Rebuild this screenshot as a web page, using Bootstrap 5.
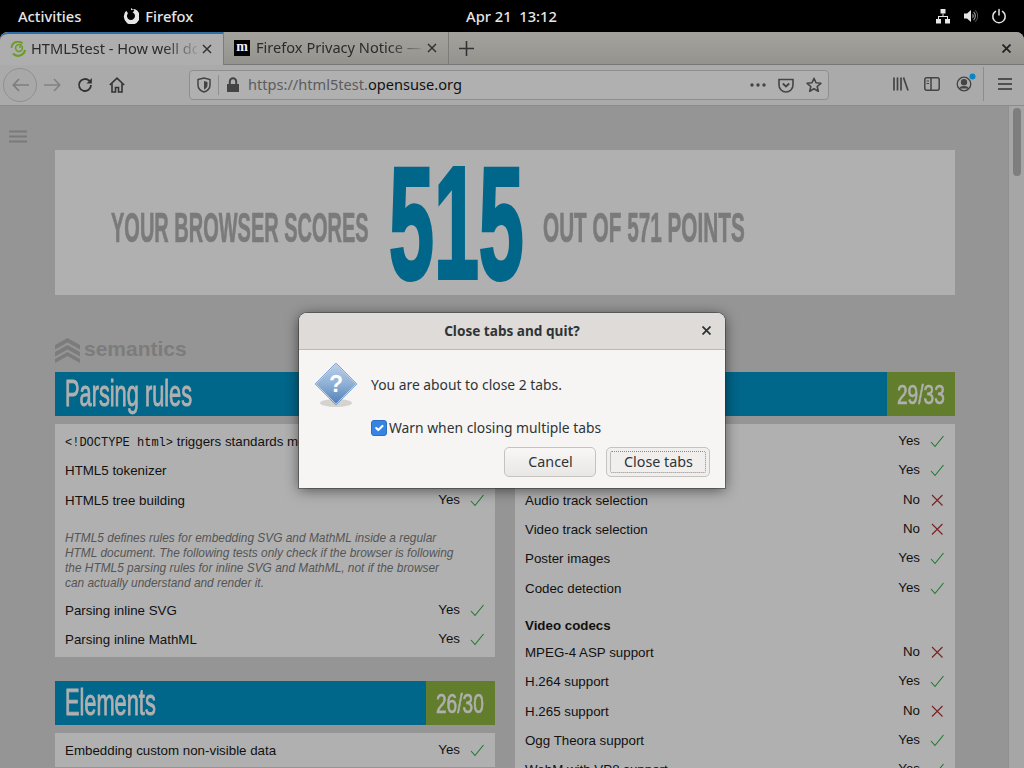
<!DOCTYPE html>
<html lang="en">
<head>
<meta charset="utf-8">
<title>Close tabs and quit?</title>
<link rel="stylesheet" href="https://cdn.jsdelivr.net/npm/bootstrap@5.3.0/dist/css/bootstrap.min.css">
<style>
html,body{margin:0;height:768px;overflow:hidden;background:#000}
.desk{position:relative;width:1024px;height:768px;overflow:hidden;font-family:"Noto Sans","Open Sans",sans-serif}
.topbar{height:32px;background:#000;color:#e6e6e6;font-size:14.7px;font-weight:500;padding:0 17px 0 18px}
.topbar .clock{position:absolute;left:0;right:0;text-align:center;padding-right:1px}
.ffname{margin-left:42px}
.ffname svg{margin-right:6px}
.tray{margin-left:auto;gap:12px}
.win{height:736px;background:#959595;border-radius:8px 8px 0 0;overflow:hidden}
.tabstrip{height:33px;background:linear-gradient(#a4a29d,#95938e);border-bottom:1px solid #777;color:#2b2b2b;font-size:14.6px}
.tabx{height:32px;width:225px;padding:0 11px 0 10px;gap:6px;border-right:1px solid #7c7c78}
.tabx.on{background:#aeaeae;border-top:2px solid #2e6ea8;border-radius:8px 0 0 0;height:33px;padding:0 11px 2px 10px;gap:5px;width:224px;border-right:1px solid #7c7c78}
.tabt{flex:1;white-space:nowrap;overflow:hidden;-webkit-mask-image:linear-gradient(90deg,#000 80%,rgba(0,0,0,.15) 100%);mask-image:linear-gradient(90deg,#000 80%,rgba(0,0,0,.15) 100%)}
.mfav{width:16px;height:16px;background:#000;color:#eee;font:bold 14px/14px "Liberation Serif",serif;text-align:center;flex:none}
.newtab{width:34px}
.winx{margin-left:auto;margin-right:13px}
.toolbar{height:41px;background:#aaaaaa;border-bottom:1px solid #8c8c8c;position:relative;padding-left:3px;padding-bottom:1px}
.backc{width:34px;height:34px;border:1px solid #909090;border-radius:50%;background:#a8a8a8;flex:none}
.tbi{width:32px;flex:none}
.tbfwd{margin:0 3px 0 -3px}
.urlbar{position:absolute;left:189px;top:5px;width:640px;height:30px;background:#b0b0b0;border:1px solid #8e8e8e;border-radius:4px;padding:0 6px 0 7px;font-size:14.6px;color:#5c5c5c}
.urlsep{width:1px;height:20px;background:#8e8e8e;margin:0 7px}
.urlbar b{font-weight:400;color:#111}
.urlend{margin-left:auto;gap:12px}
.tbright{position:absolute;left:893px;top:-1px;height:40px;width:125px}
.vsep{width:1px;height:34px;background:#8c8c8c;position:absolute;left:90px;top:3px}
.viewport{height:662px;position:relative}
.pagescroll{flex:1;min-width:0}
.sbar{width:16px;background:#a6a6a6;border-left:1px solid #909090;flex:none;padding:2px 3px 0 4px}
.sthumb{width:8px;height:68px;background:#7e7e7e;border-radius:4px}
.burger{padding:24px 0 0 9px;height:44px}
.wrapcol{padding-left:55px;width:1008px}
.banner{width:900px;height:145px;background:#b0b0b0;padding-left:56px;gap:20px}
.slim{display:inline-block;font-family:"Liberation Sans Narrow","Liberation Sans",sans-serif;font-weight:700;white-space:nowrap;transform-origin:0 50%}
.boxa{width:258px;height:50px;color:#7a7a7a;margin-top:11px}
.boxb{width:134px;height:145px;color:#00668a}
.boxc{width:201px;height:50px;color:#7a7a7a;margin-top:11px}
.boxa .slim,.boxc .slim{font-size:42px;line-height:50px;-webkit-text-stroke:.7px currentColor}
.boxa .slim{transform:scaleX(.476)}
.boxc .slim{transform:scaleX(.494)}
.boxb .slim{font-size:160px;line-height:145px;transform:scaleX(.505);-webkit-text-stroke:4px currentColor}
.semhead{margin-top:42px;height:35px;color:#7c7c7c;font:700 21px/24px "Liberation Sans",sans-serif;gap:4px;align-items:flex-start}
.semhead svg{margin-top:1px}
.cols{width:900px;gap:20px}
.colw{width:440px}
.sechd{height:44px;background:#00668a;color:#b0b0b0}
.sechd .slim{font-size:36px;line-height:44px;font-weight:400;margin-left:10px;transform:scaleX(.605);-webkit-text-stroke:.9px currentColor}
.scorebox{background:#627d2b;height:44px;color:#b0b0b0;flex:none;overflow:hidden}
.scorebox .slim{font-size:28.500px;line-height:44px;font-weight:400;margin-left:10px;transform:scaleX(.67);-webkit-text-stroke:.7px currentColor}
.sb68{width:68px}
.sb69{width:69px}
.tests{margin-top:8px;background:#b0b0b0;padding:2.4px 0 2.6px;color:#111;font:13.33px/15px "Liberation Sans",sans-serif}
.trow{height:29.33px;padding:0 11px 0 10px;align-items:center;white-space:nowrap}
.tlab{flex:1;padding-top:1px}
.tlab code{font:12px "Liberation Mono",monospace;color:#111}
.tres{width:32px;text-align:right;padding-bottom:1px;margin-right:10px}
.tnote{font:italic 11.9px/15px "Liberation Sans",sans-serif;color:#555;padding:17px 10px 4px;margin:0}
.tgroup{font-weight:700;height:35px;padding:16px 10px 0}
.mt24x{margin-top:24px}
.dlg{position:absolute;left:299px;top:313px;width:426px;height:175px;background:#f6f5f4;border-radius:8px 8px 0 0;box-shadow:0 2px 14px rgba(0,0,0,.55),0 0 0 1px rgba(60,60,60,.45);color:#2e3436;font-size:13.85px}
.dlghd{height:37px;background:#dedbd8;border-bottom:1px solid #bcb8b3;border-radius:8px 8px 0 0;font-weight:700;font-size:13.6px;position:relative}
.dlgx{position:absolute;left:403px;top:13px;line-height:0}
.dlgbody{padding:13px 15px 0 16px}
.dlgmsg{gap:14px;height:43px}
.dlgmsg svg{margin-top:2px}
.dlgmsg span{padding-top:2px}
.dlgchk{margin:12px 0 0 56px;gap:2px;height:20px}
.dlgchk .form-check-input{width:16px;height:16px;margin:0;background-color:#3584e4;border-color:#2a6fc0;border-radius:3px;flex:none;opacity:1}
.dlgbtns{margin-top:9px;gap:10px;justify-content:flex-end}
.gbtn{height:30px;padding:0;font-size:14.3px;line-height:28px;color:#2e3436;background:linear-gradient(#f8f7f6,#e9e7e5);border:1px solid #c6c2bd;border-radius:5px}
.gcancel{width:92px;padding-left:1px}
.gclose{width:104px;padding:3px;background:#f0efed}
.gclose span{display:block;height:22px;line-height:20px;border:1px dotted #8a8a8a;border-radius:2px;padding-left:1px}
</style>
</head>
<body>
<div class="desk">
  <div class="topbar d-flex align-items-center">
    <span>Activities</span>
    <span class="ffname d-flex align-items-center">
      <svg width="16" height="16" viewBox="0 0 16 16"><path fill="#e6e6e6" d="M8 2.2V0l3.4 2.4L9.6 4.6C11 5.1 12 6.4 12 8a4 4 0 1 1-7-2.7L3.2 2.8A8 8 0 1 0 11.6 1L8 2.2z"/></svg>Firefox</span>
    <span class="clock">Apr 21&nbsp; 13:12</span>
    <span class="tray d-flex align-items-center">
      <svg width="16" height="16" viewBox="0 0 16 16" fill="#e6e6e6"><path d="M5.500 1h5v4.500h-5zM1 11h5v4.500H1zM10 11h5v4.500h-5z"/><path d="M7.500 5.500h1V8h4.500v3h-1V9H4v2H3V8h4.500z"/></svg>
      <svg width="16" height="16" viewBox="0 0 16 16" fill="#e6e6e6"><path d="M1 5.500h3L8 2v12l-4-3.500H1z"/><path d="M9.500 5.500a3.500 3.500 0 0 1 0 5zM11 3.500a6.500 6.500 0 0 1 0 9l-.7-.7a5.500 5.500 0 0 0 0-7.600z" opacity=".75"/><path d="M12.600 2a8.500 8.500 0 0 1 0 12l-.6-.6a7.500 7.500 0 0 0 0-10.800z" opacity=".45"/></svg>
      <svg width="16" height="16" viewBox="0 0 16 16" fill="none" stroke="#e6e6e6" stroke-width="1.500" stroke-linecap="round"><path d="M8 1.500V7M4.500 3.400a6.200 6.200 0 1 0 7 0"/></svg>
    </span>
  </div>
  <div class="win">
    <div class="tabstrip d-flex align-items-start">
      <div class="tabx on d-flex align-items-center">
        <svg width="16" height="16" viewBox="0 0 16 16" fill="none"><path d="M3 12.500A7 7 0 0 0 15 9" stroke="#6c9b22" stroke-width="2.200"/><path d="M1.500 7A6.500 6.500 0 0 1 12.500 2.500" stroke="#6c9b22" stroke-width="1.800"/><circle cx="9" cy="7" r="3.400" stroke="#6c9b22" stroke-width="1.500"/><circle cx="10" cy="6" r="1" fill="#6c9b22"/></svg>
        <span class="tabt">HTML5test - How well do</span>
        <svg width="10" height="10" viewBox="0 0 10 10" stroke="#333" stroke-width="1.500"><path d="M1 1l8 8M9 1l-8 8"/></svg>
      </div>
      <div class="tabx d-flex align-items-center">
        <span class="mfav">m</span>
        <span class="tabt">Firefox Privacy Notice — Mozilla</span>
        <svg width="10" height="10" viewBox="0 0 10 10" stroke="#333" stroke-width="1.500"><path d="M1 1l8 8M9 1l-8 8"/></svg>
      </div>
      <div class="newtab d-flex align-items-center justify-content-center h-100">
        <svg width="15" height="15" viewBox="0 0 15 15" stroke="#333" stroke-width="1.600"><path d="M7.500 0v15M0 7.500h15"/></svg>
      </div>
      <div class="winx d-flex align-items-center h-100">
        <svg width="9" height="9" viewBox="0 0 9 9" stroke="#222" stroke-width="1.800"><path d="M.5.500l8 8M8.500.500l-8 8"/></svg>
      </div>
    </div>
    <div class="toolbar d-flex align-items-center">
      <div class="backc d-flex align-items-center justify-content-center">
        <svg width="17" height="14" viewBox="0 0 17 14" fill="none" stroke="#7d7d7d" stroke-width="1.700"><path d="M7 1L1.300 7 7 13M1.500 7H17"/></svg>
      </div>
      <div class="tbi tbfwd d-flex justify-content-center ps-1">
        <svg width="17" height="14" viewBox="0 0 17 14" fill="none" stroke="#828282" stroke-width="1.700"><path d="M10 1l5.700 6L10 13M15.500 7H0"/></svg>
      </div>
      <div class="tbi d-flex justify-content-center">
        <svg width="16" height="16" viewBox="0 0 16 16" fill="none" stroke="#333" stroke-width="1.800"><path d="M14 8a6 6 0 1 1-1.800-4.300L14 5.500"/><path d="M14.800 1v5.500H9.500z" fill="#333" stroke="none"/></svg>
      </div>
      <div class="tbi d-flex justify-content-center">
        <svg width="16" height="16" viewBox="0 0 16 16" fill="none" stroke="#333" stroke-width="1.600"><path d="M.8 8L8 1.200 15.200 8"/><path d="M3 6.500V15h3.500v-4.500h3V15H13V6.500"/></svg>
      </div>
      <div class="urlbar d-flex align-items-center">
        <svg width="14" height="16" viewBox="0 0 14 16" fill="none" stroke="#444" stroke-width="1.500"><path d="M1 2.500L7 1l6 1.500V8c0 3.500-3 6-6 7-3-1-6-3.500-6-7z"/><path d="M7 4l3.500 1V8C10.500 10 9 11.500 7 12.500z" fill="#444" stroke="none"/></svg>
        <span class="urlsep"></span>
        <svg width="14" height="16" viewBox="0 0 14 16" class="me-2"><path fill="#444" d="M1 7h12v8H1z"/><path fill="none" stroke="#444" stroke-width="2" d="M3.800 7V4.500a3.200 3.200 0 0 1 6.400 0V7"/></svg>
        <span>https://html5test.<b>opensuse.org</b></span>
        <span class="urlend d-flex align-items-center">
          <svg width="16" height="4" viewBox="0 0 16 4" fill="#444"><circle cx="2" cy="2" r="1.700"/><circle cx="8" cy="2" r="1.700"/><circle cx="14" cy="2" r="1.700"/></svg>
          <svg width="16" height="15" viewBox="0 0 16 15" fill="none" stroke="#444" stroke-width="1.600"><path d="M1 1.500h14V7a7 7 0 0 1-14 0z"/><path d="M4.800 5.500L8 8.500l3.200-3" stroke-width="1.800"/></svg>
          <svg width="16" height="16" viewBox="0 0 16 16" fill="none" stroke="#444" stroke-width="1.600"><path d="M8 1.300l2 4.500 4.900.5-3.700 3.200 1.100 4.800L8 11.800l-4.300 2.500 1.100-4.800L1.100 6.300 6 5.800z" stroke-linejoin="round"/></svg>
        </span>
      </div>
      <div class="tbright">
        <svg class="position-absolute top-50 translate-middle-y" width="16" height="15" viewBox="0 0 16 15" fill="none" stroke="#444" stroke-width="1.700" style="left:0"><path d="M1 1v13M4.500 1v13M8 1v13M10.500 1l4.500 13"/></svg>
        <svg class="position-absolute top-50 translate-middle-y" width="16" height="14" viewBox="0 0 16 14" fill="none" stroke="#444" stroke-width="1.500" style="left:31px"><rect x=".8" y=".8" width="14.400" height="12.400" rx="2"/><path d="M7 1v12" stroke-width="1.500"/><path d="M2.500 4h2.500M2.500 6.500h2.500" stroke-width="1"/></svg>
        <svg class="position-absolute top-50 translate-middle-y" width="16" height="16" viewBox="0 0 16 16" fill="none" stroke="#444" stroke-width="1.300" style="left:63px"><circle cx="8" cy="8" r="6.800"/><circle cx="8" cy="6.200" r="2.500" fill="#444"/><path d="M3.500 12.500C5 10 11 10 12.500 12.500" fill="#444"/></svg>
        <svg class="position-absolute" width="7" height="7" viewBox="0 0 7 7" style="left:76px;top:9px"><circle cx="3.500" cy="3.500" r="3" fill="#0a85c2"/></svg>
        <span class="vsep"></span>
        <svg class="position-absolute top-50 translate-middle-y" width="14" height="13" viewBox="0 0 14 13" stroke="#333" stroke-width="1.700" style="left:105px"><path d="M0 1.500h14M0 6.500h14M0 11.500h14"/></svg>
      </div>
    </div>
    <div class="viewport d-flex">
      <div class="pagescroll">
        <div class="burger">
          <svg class="d-block" width="18" height="13" viewBox="0 0 18 13" stroke="#7a7a7a" stroke-width="2.200"><path d="M0 1.500h18M0 6.500h18M0 11.500h18"/></svg>
        </div>
        <div class="wrapcol">
          <div class="banner d-flex align-items-center">
            <div class="boxa"><span class="slim">YOUR BROWSER SCORES</span></div>
            <div class="boxb"><span class="slim">515</span></div>
            <div class="boxc"><span class="slim">OUT OF 571 POINTS</span></div>
          </div>
          <div class="semhead d-flex">
            <svg width="25" height="25" viewBox="0 0 25 25" fill="#7c7c7c"><path d="M12.500 0L25 7v4.500L12.500 4.500 0 11.500V7z"/><path d="M12.500 7L25 14v4.500L12.500 11.500 0 18.500V14z"/><path d="M12.500 14L25 21v4l-12.500-7L0 25v-4z"/></svg>
            <span>semantics</span>
          </div>
          <div class="cols d-flex">
            <div class="colw">
              <div class="sechd d-flex justify-content-between">
                <span class="slim">Parsing rules</span>
              </div>
              <div class="tests">
                <div class="trow d-flex"><span class="tlab"><code>&lt;!DOCTYPE html&gt;</code> triggers standards mode</span><span class="tres">Yes</span><svg width="14" height="14" viewBox="0 0 14 14" fill="none" stroke="#1f7a2e" stroke-width="1.100"><path d="M1 8l4 4.500L13.500 2"/></svg></div>
                <div class="trow d-flex"><span class="tlab">HTML5 tokenizer</span><span class="tres">Yes</span><svg width="14" height="14" viewBox="0 0 14 14" fill="none" stroke="#1f7a2e" stroke-width="1.100"><path d="M1 8l4 4.500L13.500 2"/></svg></div>
                <div class="trow d-flex"><span class="tlab">HTML5 tree building</span><span class="tres">Yes</span><svg width="14" height="14" viewBox="0 0 14 14" fill="none" stroke="#1f7a2e" stroke-width="1.100"><path d="M1 8l4 4.500L13.500 2"/></svg></div>
                <p class="tnote">HTML5 defines rules for embedding SVG and MathML inside a regular<br>HTML document. The following tests only check if the browser is following<br>the HTML5 parsing rules for inline SVG and MathML, not if the browser<br>can actually understand and render it.</p>
                <div class="trow d-flex"><span class="tlab">Parsing inline SVG</span><span class="tres">Yes</span><svg width="14" height="14" viewBox="0 0 14 14" fill="none" stroke="#1f7a2e" stroke-width="1.100"><path d="M1 8l4 4.500L13.500 2"/></svg></div>
                <div class="trow d-flex"><span class="tlab">Parsing inline MathML</span><span class="tres">Yes</span><svg width="14" height="14" viewBox="0 0 14 14" fill="none" stroke="#1f7a2e" stroke-width="1.100"><path d="M1 8l4 4.500L13.500 2"/></svg></div>
              </div>
              <div class="sechd d-flex justify-content-between mt24x">
                <span class="slim">Elements</span>
                <span class="scorebox sb69"><span class="slim">26/30</span></span>
              </div>
              <div class="tests">
                <div class="trow d-flex"><span class="tlab">Embedding custom non-visible data</span><span class="tres">Yes</span><svg width="14" height="14" viewBox="0 0 14 14" fill="none" stroke="#1f7a2e" stroke-width="1.100"><path d="M1 8l4 4.500L13.500 2"/></svg></div>
              </div>
            </div>
            <div class="colw">
              <div class="sechd d-flex justify-content-between">
                <span class="slim">Video</span>
                <span class="scorebox sb68"><span class="slim">29/33</span></span>
              </div>
              <div class="tests">
                <div class="trow d-flex"><span class="tlab">Video element</span><span class="tres">Yes</span><svg width="14" height="14" viewBox="0 0 14 14" fill="none" stroke="#1f7a2e" stroke-width="1.100"><path d="M1 8l4 4.500L13.500 2"/></svg></div>
                <div class="trow d-flex"><span class="tlab">Subtitles</span><span class="tres">Yes</span><svg width="14" height="14" viewBox="0 0 14 14" fill="none" stroke="#1f7a2e" stroke-width="1.100"><path d="M1 8l4 4.500L13.500 2"/></svg></div>
                <div class="trow d-flex"><span class="tlab">Audio track selection</span><span class="tres">No</span><svg width="14" height="14" viewBox="0 0 14 14" fill="none" stroke="#7a2020" stroke-width="1.100"><path d="M2 2l10.500 10.500M12.500 2L2 12.500"/></svg></div>
                <div class="trow d-flex"><span class="tlab">Video track selection</span><span class="tres">No</span><svg width="14" height="14" viewBox="0 0 14 14" fill="none" stroke="#7a2020" stroke-width="1.100"><path d="M2 2l10.500 10.500M12.500 2L2 12.500"/></svg></div>
                <div class="trow d-flex"><span class="tlab">Poster images</span><span class="tres">Yes</span><svg width="14" height="14" viewBox="0 0 14 14" fill="none" stroke="#1f7a2e" stroke-width="1.100"><path d="M1 8l4 4.500L13.500 2"/></svg></div>
                <div class="trow d-flex"><span class="tlab">Codec detection</span><span class="tres">Yes</span><svg width="14" height="14" viewBox="0 0 14 14" fill="none" stroke="#1f7a2e" stroke-width="1.100"><path d="M1 8l4 4.500L13.500 2"/></svg></div>
                <div class="tgroup">Video codecs</div>
                <div class="trow d-flex"><span class="tlab">MPEG-4 ASP support</span><span class="tres">No</span><svg width="14" height="14" viewBox="0 0 14 14" fill="none" stroke="#7a2020" stroke-width="1.100"><path d="M2 2l10.500 10.500M12.500 2L2 12.500"/></svg></div>
                <div class="trow d-flex"><span class="tlab">H.264 support</span><span class="tres">Yes</span><svg width="14" height="14" viewBox="0 0 14 14" fill="none" stroke="#1f7a2e" stroke-width="1.100"><path d="M1 8l4 4.500L13.500 2"/></svg></div>
                <div class="trow d-flex"><span class="tlab">H.265 support</span><span class="tres">No</span><svg width="14" height="14" viewBox="0 0 14 14" fill="none" stroke="#7a2020" stroke-width="1.100"><path d="M2 2l10.500 10.500M12.500 2L2 12.500"/></svg></div>
                <div class="trow d-flex"><span class="tlab">Ogg Theora support</span><span class="tres">Yes</span><svg width="14" height="14" viewBox="0 0 14 14" fill="none" stroke="#1f7a2e" stroke-width="1.100"><path d="M1 8l4 4.500L13.500 2"/></svg></div>
                <div class="trow d-flex"><span class="tlab">WebM with VP8 support</span><span class="tres">Yes</span><svg width="14" height="14" viewBox="0 0 14 14" fill="none" stroke="#1f7a2e" stroke-width="1.100"><path d="M1 8l4 4.500L13.500 2"/></svg></div>
              </div>
            </div>
          </div>
        </div>
      </div>
      <div class="sbar"><div class="sthumb"></div></div>
    </div>
  </div>
  <div class="dlg">
    <div class="dlghd d-flex align-items-center justify-content-center">
      <span>Close tabs and quit?</span>
      <span class="dlgx"><svg width="9" height="9" viewBox="0 0 9 9" stroke="#2e3436" stroke-width="1.800"><path d="M.5.500l8 8M8.500.500l-8 8"/></svg></span>
    </div>
    <div class="dlgbody">
      <div class="dlgmsg d-flex align-items-center">
        <svg width="42" height="46" viewBox="0 0 42 46">
          <defs><linearGradient id="dg" x1="0" y1="0" x2="0" y2="1"><stop offset="0" stop-color="#b9d0e8"/><stop offset=".5" stop-color="#8fb0d6"/><stop offset="1" stop-color="#4f7fb8"/></linearGradient></defs>
          <ellipse cx="21" cy="40" rx="16" ry="4" fill="#d5d3d0"/>
          <path d="M21 .8L41 21 21 41.200 1 21z" fill="url(#dg)" stroke="#fff" stroke-width="1"/>
          <path d="M21 .3L41.600 21 21 41.700.4 21z" fill="none" stroke="#3a6fb5" stroke-width=".9"/>
          <text x="21" y="29" text-anchor="middle" font-family="Liberation Sans" font-weight="700" font-size="23" fill="#fff">?</text>
        </svg>
        <span>You are about to close 2 tabs.</span>
      </div>
      <label class="dlgchk d-flex align-items-center">
        <input class="form-check-input" type="checkbox" checked>
        <span>Warn when closing multiple tabs</span>
      </label>
      <div class="dlgbtns d-flex">
        <button type="button" class="btn gbtn gcancel">Cancel</button>
        <button type="button" class="btn gbtn gclose"><span>Close tabs</span></button>
      </div>
    </div>
  </div>
</div>
<script src="https://cdn.jsdelivr.net/npm/bootstrap@5.3.0/dist/js/bootstrap.bundle.min.js"></script>
</body>
</html>
